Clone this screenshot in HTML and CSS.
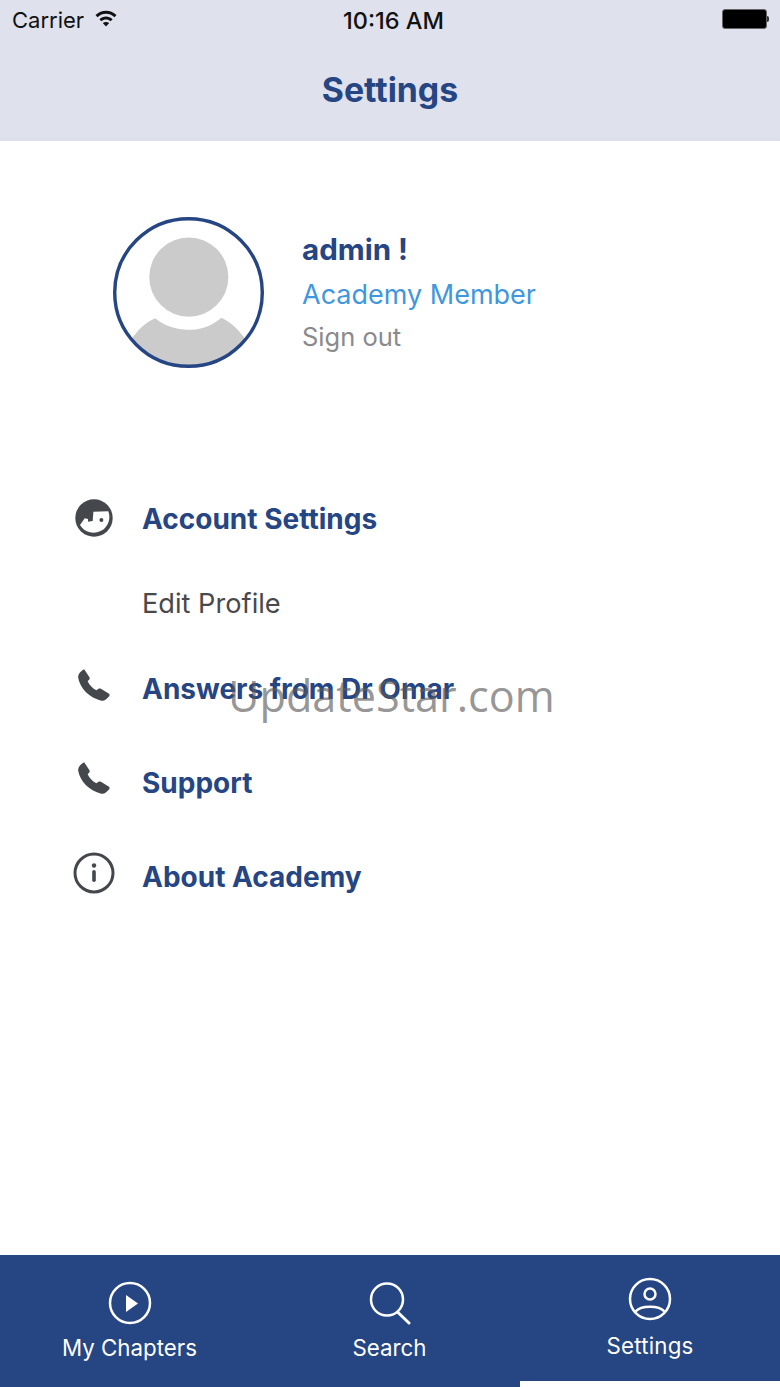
FILE: index.html
```html
<!DOCTYPE html>
<html lang="en">
<head>
  <meta charset="UTF-8" />
  <title>Settings</title>
  <meta name="viewport" content="width=device-width, initial-scale=1.0" />
  <link rel="stylesheet" href="styles.css">
</head>
<body>
  <div class="app">
    <header class="top">
      <div class="status">
        <div class="status-left">
          <span>Carrier</span>
          <svg class="wifi" width="24" height="18" viewBox="0 0 24 18">
            <path d="M1.500 6C7.500 .2 16.500 .2 22.500 6L20.500 8.200C15.500 3.700 8.500 3.700 3.500 8.200Z" />
            <path d="M5.400 10.200C9.300 6.500 14.700 6.500 18.600 10.200L16.600 12.300C14 10 10 10 7.400 12.300Z" />
            <path d="M8.800 14C10.800 12.500 13.200 12.500 15.200 14L12 17.600Z" />
          </svg>
        </div>
        <div class="status-time">10:16 AM</div>
        <div class="battery"><span class="battery-fill"></span><span class="battery-tip"></span></div>
      </div>
      <h1 class="title">Settings</h1>
    </header>

    <main class="content">
      <section class="profile">
        <svg class="avatar" width="151" height="151" viewBox="0 0 150 150">
          <defs>
            <clipPath id="avatarClip"><circle cx="75" cy="75" r="73" /></clipPath>
          </defs>
          <circle cx="75.300" cy="59.700" r="39.300" fill="#cbcbcb" />
          <path clip-path="url(#avatarClip)" fill="#cbcbcb" d="M42 100.700C60 116 90 116 107.700 100C118 105 125 112 132 122L150 150H0L18 122C25 112 32 105 42 100.700Z" />
          <circle cx="75" cy="75" r="73.300" fill="none" stroke="#254583" stroke-width="3.400" />
        </svg>
        <div class="profile-text">
          <div class="profile-name">admin !</div>
          <div class="profile-role">Academy Member</div>
          <div class="profile-out">Sign out</div>
        </div>
      </section>

      <ul class="menu">
        <li class="menu-row row-first">
          <svg class="menu-icon icon-face" width="40" height="40" viewBox="0 0 40 40">
            <circle cx="20" cy="20" r="18.700" fill="#44474c" />
            <path fill="#fff" d="M6 27L10.700 20.300L14 21V23.700L18.700 23L19.400 13.700L34.300 13.200A15.800 15.800 0 0 1 6 27Z" />
            <circle cx="27.400" cy="22" r="2" fill="#44474c" />
          </svg>
          <span class="menu-head">Account Settings</span>
        </li>
        <li class="menu-row row-sub">
          <span class="menu-sub">Edit Profile</span>
        </li>
        <li class="menu-row row-sub">
          <svg class="menu-icon icon-phone" width="42" height="42" viewBox="0 0 40 40">
            <path class="phone" d="M9.700 3L14.700 10.700C15.200 11.600 15 12.500 14.300 13.200L13 14.500C14.500 18 18 21.500 21.300 23L23 21.800C23.800 21.200 24.800 21.200 25.600 21.600L33 26.300C34 27 34.200 28 33.500 28.800C31 31.500 29 33.500 26 33C15 31 5.500 21 4 11.300C3.600 8 6 5 9.700 3Z" />
          </svg>
          <span class="menu-head">Answers from Dr Omar</span>
        </li>
        <li class="menu-row row-main">
          <svg class="menu-icon icon-phone icon-up" width="42" height="42" viewBox="0 0 40 40">
            <path class="phone" d="M9.700 3L14.700 10.700C15.200 11.600 15 12.500 14.300 13.200L13 14.500C14.500 18 18 21.500 21.300 23L23 21.800C23.800 21.200 24.800 21.200 25.600 21.600L33 26.300C34 27 34.200 28 33.500 28.800C31 31.500 29 33.500 26 33C15 31 5.500 21 4 11.300C3.600 8 6 5 9.700 3Z" />
          </svg>
          <span class="menu-head">Support</span>
        </li>
        <li class="menu-row row-main">
          <svg class="menu-icon icon-up-more" width="42" height="42" viewBox="0 0 42 42">
            <circle cx="21" cy="21" r="19" fill="none" stroke="#44474c" stroke-width="3" />
            <circle cx="21" cy="13.500" r="2.200" fill="#44474c" />
            <rect x="19.200" y="18" width="3.600" height="12" rx="1.800" fill="#44474c" />
          </svg>
          <span class="menu-head">About Academy</span>
        </li>
      </ul>
    </main>

    <nav class="tabs">
      <a class="tab">
        <svg width="44" height="44" viewBox="0 0 44 44">
          <circle cx="22" cy="22" r="20" fill="none" stroke="#fff" stroke-width="2.500" />
          <path d="M18 14L30 22.500L18 31Z" fill="#fff" />
        </svg>
        <span>My Chapters</span>
      </a>
      <a class="tab">
        <svg width="44" height="44" viewBox="0 0 44 44">
          <circle cx="19" cy="18.500" r="16" fill="none" stroke="#fff" stroke-width="2.500" />
          <path d="M29.500 31L41 42" fill="none" stroke="#fff" stroke-width="3" stroke-linecap="round" />
        </svg>
        <span>Search</span>
      </a>
      <a class="tab tab-active">
        <svg width="44" height="44" viewBox="0 0 44 44">
          <circle cx="22" cy="22" r="20" fill="none" stroke="#fff" stroke-width="2.500" />
          <circle cx="22" cy="17" r="5.500" fill="none" stroke="#fff" stroke-width="2.500" />
          <path d="M7.500 34.500C13 28 31 28 36.500 34.500" fill="none" stroke="#fff" stroke-width="2.500" />
        </svg>
        <span>Settings</span>
      </a>
    </nav>

    <div class="watermark">UpdateStar.com</div>
  </div>
</body>
</html>
```

FILE: styles.css
```css
body {
  margin: 0;
  padding: 0;
  font-family: Inter, "Liberation Sans", sans-serif;
  background: #fff;
}
.app {
  position: relative;
  width: 780px;
  height: 1387px;
  display: flex;
  flex-direction: column;
  overflow: hidden;
}
.top {
  height: 141px;
  background: #dfe1ec;
  flex: none;
  box-shadow: inset 0 -4px 4px -2px rgba(0, 0, 0, 0.02);
}
.status {
  height: 40px;
  padding: 0 12px;
  display: grid;
  grid-template-columns: 1fr auto 1fr;
  align-items: center;
  font-size: 22px;
  color: #111;
}
.status-left {
  display: flex;
  align-items: center;
  gap: 10px;
}
.wifi {
  fill: #111;
  margin-top: -5px;
}
.status-time {
  padding-left: 7px;
  font-size: 23.500px;
  font-weight: 500;
}
.battery {
  justify-self: end;
  display: flex;
  align-items: center;
  margin-top: -2px;
  margin-right: -1px;
}
.battery-fill {
  width: 43px;
  height: 18px;
  background: #000;
  border: 1px solid #666;
  border-radius: 3px;
}
.battery-tip {
  width: 2px;
  height: 6px;
  background: #333;
  border-radius: 0 2px 2px 0;
}
.title {
  margin: 0;
  padding-top: 29px;
  text-align: center;
  font-size: 33.800px;
  line-height: 42px;
  font-weight: 700;
  color: #254583;
}
.content {
  flex: 1;
}
.profile {
  display: flex;
  align-items: flex-start;
  gap: 38px;
  padding: 76px 0 0 113px;
}
.profile-text {
  display: flex;
  flex-direction: column;
  padding-top: 10px;
}
.profile-name {
  font-size: 29.500px;
  line-height: 45px;
  font-weight: 700;
  color: #254583;
}
.profile-role {
  font-size: 27px;
  line-height: 45px;
  color: #3f97dd;
}
.profile-out {
  font-size: 25.500px;
  line-height: 39px;
  color: #8a8a8e;
}
.menu {
  list-style: none;
  margin: 0;
  padding: 129px 0 0 0;
}
.menu-row {
  display: grid;
  grid-template-columns: 142px 1fr;
  align-items: center;
  height: 44px;
}
.row-sub {
  margin-top: 41px;
}
.row-main {
  margin-top: 50px;
}
.menu-icon {
  justify-self: center;
  margin-left: 46px;
}
.icon-face {
  margin-top: -2px;
}
.icon-phone {
  margin-left: 48px;
  margin-top: -4px;
}
.icon-phone.icon-up {
  margin-top: -6px;
}
.icon-up-more {
  margin-top: -9px;
}
.menu-head {
  grid-column: 2;
  font-size: 28px;
  font-weight: 700;
  color: #254583;
  margin-top: -1px;
}
.menu-sub {
  grid-column: 2;
  font-size: 27.200px;
  color: #48494c;
  margin-top: -2px;
}
.phone {
  fill: #44474c;
}
.tabs {
  flex: none;
  height: 132px;
  background: #254583;
  display: grid;
  grid-template-columns: 1fr 1fr 1fr;
}
.tab {
  display: flex;
  flex-direction: column;
  align-items: center;
  gap: 9px;
  padding-top: 26px;
  padding-right: 1px;
  font-size: 22.300px;
  line-height: 28px;
  color: #fff;
}
.tab-active {
  padding-top: 22px;
  padding-right: 0;
  gap: 11px;
  box-shadow: inset 0 -6px 0 #fff;
}
.tab-active span {
  letter-spacing: 0.2px;
}
.watermark {
  position: absolute;
  left: 228px;
  top: 670px;
  font-size: 43.200px;
  line-height: 52px;
  color: rgba(90, 90, 90, 0.65);
  font-family: "Open Sans", sans-serif;
  white-space: nowrap;
}
```
